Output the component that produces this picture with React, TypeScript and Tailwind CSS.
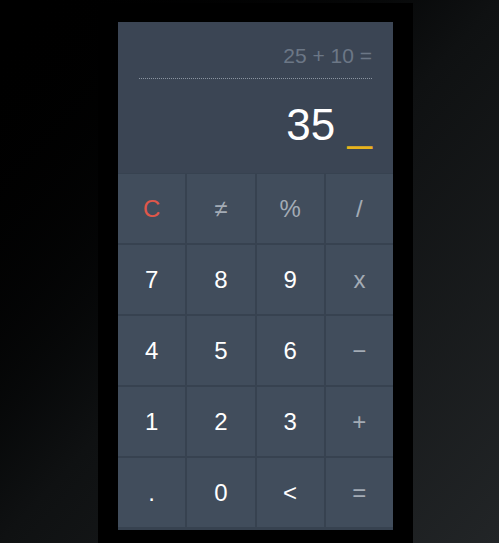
const keys: { label: string; tone: "clear" | "op" | "num" }[] = [
  { label: "C", tone: "clear" },
  { label: "≠", tone: "op" },
  { label: "%", tone: "op" },
  { label: "/", tone: "op" },
  { label: "7", tone: "num" },
  { label: "8", tone: "num" },
  { label: "9", tone: "num" },
  { label: "x", tone: "op" },
  { label: "4", tone: "num" },
  { label: "5", tone: "num" },
  { label: "6", tone: "num" },
  { label: "−", tone: "op" },
  { label: "1", tone: "num" },
  { label: "2", tone: "num" },
  { label: "3", tone: "num" },
  { label: "+", tone: "op" },
  { label: ".", tone: "num" },
  { label: "0", tone: "num" },
  { label: "<", tone: "num" },
  { label: "=", tone: "op" },
];

const toneClass = {
  clear: "text-[#e0574a]",
  op: "text-[#a3abb5]",
  num: "text-white",
};

export default function App() {
  return (
    <div
      className="h-[543px] w-full overflow-hidden bg-gradient-to-br from-black via-[#0f1112] to-[#222527] pl-[98px] pt-[3px]"
      style={{ fontFamily: '"Liberation Sans", Arial, sans-serif' }}
    >
      <div className="h-[560px] w-[315px] bg-black px-[20px] pt-[19px]">
        <div className="w-[275px]">
          {/* display */}
          <div className="h-[151px] bg-[#3b4554] px-[21px] pt-[22px]">
            <div className="text-right text-[21px] leading-[24px] text-[#6c7786]">25 + 10 =</div>
            <div className="mt-[10px] border-t border-dotted border-[#8a94a1]" />
            <div className="mt-[24px] text-right text-[44px] leading-[44px] text-white">
              35 <span className="text-[#e8b41c]">_</span>
            </div>
          </div>

          {/* keypad */}
          <div className="grid grid-cols-4 gap-[2px] bg-[#374250] pb-[3px] pt-[1px]">
            {keys.map((k) => (
              <button
                key={k.label}
                className={`flex h-[69px] items-center justify-center bg-[#414d5c] text-[24px] ${toneClass[k.tone]}`}
              >
                {k.label}
              </button>
            ))}
          </div>
        </div>
      </div>
    </div>
  );
}
